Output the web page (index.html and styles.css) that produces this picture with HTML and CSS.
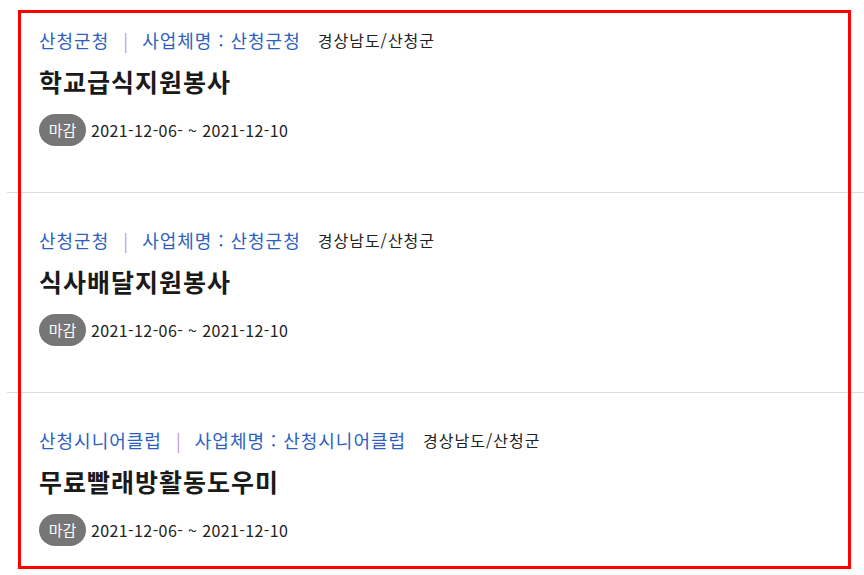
FILE: index.html
```html
<!DOCTYPE html>
<html lang="ko">
<head>
  <meta charset="UTF-8">
  <title>봉사활동 모집</title>
  <meta name="viewport" content="width=device-width, initial-scale=1.0"/>
  <link rel="stylesheet" href="styles.css">
</head>
<body>
  <ul class="list">
    <li class="item">
      <div class="meta">
        <a class="org" href="#">산청군청</a>
        <span class="bar">|</span>
        <a class="org" href="#">사업체명 : 산청군청</a>
        <span class="area">경상남도/산청군</span>
      </div>
      <h2 class="title">학교급식지원봉사</h2>
      <div class="period">
        <span class="badge">마감</span>
        <span class="date">2021-12-06- ~ 2021-12-10</span>
      </div>
    </li>
    <li class="item">
      <div class="meta">
        <a class="org" href="#">산청군청</a>
        <span class="bar">|</span>
        <a class="org" href="#">사업체명 : 산청군청</a>
        <span class="area">경상남도/산청군</span>
      </div>
      <h2 class="title">식사배달지원봉사</h2>
      <div class="period">
        <span class="badge">마감</span>
        <span class="date">2021-12-06- ~ 2021-12-10</span>
      </div>
    </li>
    <li class="item">
      <div class="meta">
        <a class="org" href="#">산청시니어클럽</a>
        <span class="bar">|</span>
        <a class="org" href="#">사업체명 : 산청시니어클럽</a>
        <span class="area">경상남도/산청군</span>
      </div>
      <h2 class="title">무료빨래방활동도우미</h2>
      <div class="period">
        <span class="badge">마감</span>
        <span class="date">2021-12-06- ~ 2021-12-10</span>
      </div>
    </li>
  </ul>

  <!-- 선택 영역 표시 -->
  <div class="highlight"></div>
</body>
</html>
```

FILE: styles.css
```css
body {
  margin: 0;
  background-color: #fff;
  color: #222;
  font-family: "Noto Sans CJK KR", "Noto Sans", sans-serif;
}
.list {
  list-style: none;
  margin: 0 0 0 7px;
  padding: 0;
}
.item {
  padding: 35px 0 46px 32px;
  border-bottom: 1px solid #dcdcdc;
}
.item:first-child {
  padding-top: 28px;
}
.meta {
  display: flex;
  align-items: center;
  height: 24px;
  font-size: 18px;
  line-height: 24px;
  letter-spacing: 1px;
}
.org {
  color: #2d5fc2;
  text-decoration: none;
}
.bar {
  color: #c297cf;
  margin: 0 14px 0 14px;
  font-size: 18px;
  letter-spacing: 0;
}
.area {
  margin-left: 17px;
  font-size: 16px;
  letter-spacing: 1px;
  color: #222;
}
.title {
  margin: 12px 0 0;
  font-size: 25px;
  line-height: 34px;
  letter-spacing: 1px;
  font-weight: bold;
  color: #1a1a1a;
}
.period {
  display: flex;
  align-items: center;
  margin-top: 16px;
}
.badge {
  display: inline-block;
  width: 47px;
  height: 32px;
  line-height: 32px;
  text-align: center;
  border-radius: 16px;
  background-color: #767676;
  color: #fff;
  font-size: 15px;
}
.date {
  margin-left: 5px;
  font-size: 16px;
  letter-spacing: 0.4px;
  color: #222;
}
.highlight {
  position: absolute;
  left: 18px;
  top: 10px;
  width: 827px;
  height: 553px;
  border: 3px solid #ff0000;
  pointer-events: none;
}
```
